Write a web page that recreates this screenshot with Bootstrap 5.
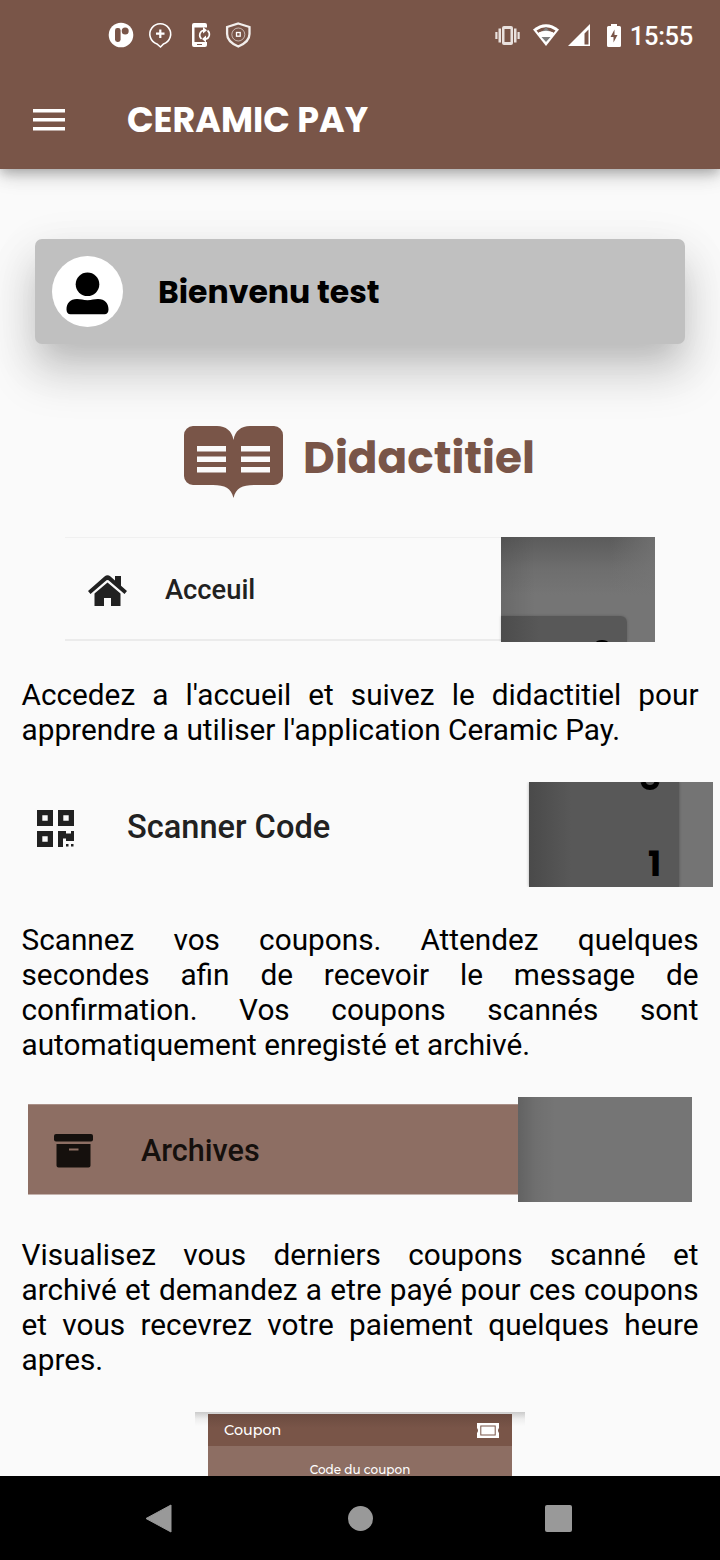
<!DOCTYPE html>
<html lang="fr">
<head>
<meta charset="utf-8">
<meta name="viewport" content="width=device-width, initial-scale=1">
<title>Ceramic Pay</title>
<link href="https://cdn.jsdelivr.net/npm/bootstrap@5.3.0/dist/css/bootstrap.min.css" rel="stylesheet">
<style>
:root{--brown:#795548;--brown-light:#8d6e63;--paper:#fafafa}
body{width:720px;height:1560px;background:var(--paper);color:#000;font-family:Roboto,"Noto Sans",sans-serif}
svg{display:block;flex:none}
.title-face{font-family:Poppins,Inter,"Open Sans",sans-serif;font-weight:700;white-space:nowrap;line-height:1}
.app-header{height:169px;background:var(--brown);color:#fff;box-shadow:0 5px 9px -1px rgba(0,0,0,.17),0 8px 18px rgba(0,0,0,.13),0 2px 20px rgba(0,0,0,.1);z-index:2}
.status{height:70px;padding:0 28px 0 107px}
.clock{font-size:25.5px;font-weight:500;line-height:1;letter-spacing:-.3px;margin:0 -1px 0 8px;padding-top:4px}
.toolbar{height:99px;padding-left:33px}
.toolbar h1{font-size:34.9px;margin-left:62px;padding-top:2px}
.page{padding-top:70px}
.welcome{height:105px;margin:0 35px;padding-left:17px;background:#c0c0c0;border-radius:7px;box-shadow:0 19px 26px -12px rgba(0,0,0,.1),0 28px 46px 4px rgba(0,0,0,.15),0 14px 50px 6px rgba(0,0,0,.06)}
.avatar{width:71px;height:71px;background:#fff}
.welcome h2{font-size:31.5px;margin-left:35px;padding-top:2px}
.guide{margin-top:81px;height:74px;gap:20px;padding-right:1px;color:var(--brown)}
.guide h2{font-size:43.75px;margin-top:-9px}
.shot{height:105px;overflow:hidden;color:#212121}
.shot-label{font-weight:500;line-height:1;white-space:nowrap}
.copy{width:677px;margin:35px auto;font-size:29.75px;line-height:35px;text-align:justify}
.scrim{background:linear-gradient(90deg,rgba(0,0,0,.16),rgba(0,0,0,.05) 18px,transparent 38px),#757575}
.shot-home{width:590px;margin-top:38px}
.shot-home .row-pane{width:436px;border-top:1px solid #f0f0f0;padding:5px 0 0 23px;height:104px;border-bottom:2px solid #ebebeb}
.shot-home .scrim{width:154px;background:linear-gradient(90deg,rgba(0,0,0,.1),transparent 34px),linear-gradient(90deg,transparent 110px,rgba(117,117,117,.75)),linear-gradient(#5b5b5b,#6e6e6e 32px,#757575 58px)}
.home-card{height:26px;width:126px;margin-top:79px;border-top-right-radius:6px;background:linear-gradient(90deg,#4c4c4c,#585858 38px);box-shadow:0 0 3px rgba(0,0,0,.2);overflow:hidden}
.dot-top{width:12px;height:5px;border-radius:50%;background:#000;margin:24px 0 0 95px}
.shot-scan{width:706px}
.shot-scan .row-pane{width:522px;padding-left:30px}
.shot-scan .scrim{width:184px;background:#747474}
.scan-card{width:150px;background:linear-gradient(90deg,#4a4a4a,#585858 42px);box-shadow:0 0 3px rgba(0,0,0,.3);color:#000}
.shot-archive{width:664px}
.shot-archive .row-pane{width:490px;height:91px;margin-top:7px;background:var(--brown-light);border-top:1px solid #a98f87;border-bottom:1px solid #c4b2ac;padding:2px 0 0 26px;color:#15100d}
.shot-archive .scrim{width:174px}
.coupon{width:330px;height:66px;overflow:hidden;background:linear-gradient(#cbcbcb,#eee 7px,#fafafa 14px);padding:2px 13px 0;color:#fff;font-family:Montserrat,Inter,sans-serif;font-weight:500}
.coupon-head{height:32px;padding:0 13px 0 16px;background:linear-gradient(#6b4b40,var(--brown) 14px);font-size:14.3px}
.coupon-body{height:40px;background:var(--brown-light);font-size:12px;line-height:14px;padding-top:17px}
.sys-nav{height:84px;background:#000}
</style>
</head>
<body class="d-flex flex-column overflow-hidden">
<header class="app-header position-relative flex-shrink-0">
  <div class="status d-flex align-items-center">
    <svg width="150" height="32" viewBox="107 19 150 32" fill="none" stroke="#fff">
      <circle cx="121" cy="35" r="12.3" fill="#fff" stroke="none"/>
      <rect x="115" y="28" width="5.6" height="14" rx="2.4" fill="#795548" stroke="none"/>
      <circle cx="125.2" cy="31" r="3.5" fill="#795548" stroke="none"/>
      <path d="M157 44a10.4 10.4 0 1 1 6.500 0l-3 3z" stroke-width="1.600"/>
      <path d="M160.300 29.500v8.500M156 33.700h8.500" stroke-width="2.200"/>
      <path d="M194 23h11a2 2 0 0 1 2 2v2.500h-12.500v14.500h12.500v3a2 2 0 0 1-2 2h-11a2 2 0 0 1-2-2V25a2 2 0 0 1 2-2z" fill="#fff" stroke="none"/>
      <path d="M197 44.500h5" stroke="#795548"/>
      <path d="M201.500 39a5 5 0 0 1 2.500-8.800M207.500 30.500a5 5 0 0 1-2 8.800" stroke-width="1.600"/>
      <path d="M203 27l4 3.300-4 3.300zM206 35.500v7l-4-3.500z" fill="#fff" stroke="none"/>
      <path d="M238.300 23.500l11.200 3.500v7c0 6-4 9.500-11.200 12.500-7.200-3-11.200-6.500-11.200-12.500v-7z" stroke-width="2.300" stroke="#f2eeec"/>
      <circle cx="238.300" cy="34.500" r="6.500" opacity=".55"/><rect x="236.500" y="32.500" width="3.700" height="3.700" stroke-width="1.300"/>
    </svg>
    <svg class="ms-auto" width="128" height="32" viewBox="493 19 128 32" fill="#fff">
      <g fill="#e9e1de"><path d="M503 26h7a2 2 0 0 1 2 2v15a2 2 0 0 1-2 2h-7a2 2 0 0 1-2-2V28a2 2 0 0 1 2-2zm.500 3v13h6V29z" fill-rule="evenodd"/><path d="M497.500 28.500h2.500v14h-2.500zM494.300 32h2.200v7h-2.200zM513 28.500h2.500v14h-2.500zM516.500 32h2.200v7h-2.200z"/></g>
      <path d="M532 29.500q13-10.500 26 0L545 46z"/>
      <path d="M535.500 30.500q9.500-6.500 19 0l-2 2.500q-7.500-4-15 0z" fill="#795548"/><path d="M545 27l4.500 5.500h-9zM540.500 37h9l-4.500 5z" fill="#7d7d7d"/><path d="M537.500 32.500q7.500-3.500 15 0l-2 2.500h-11z" fill="#fff"/>
      <path fill-rule="evenodd" d="M567 46l22-22v22zM583.500 33.500V44.500h4V29.500z"/>
      <path d="M610 24h6v2h2.500a1.500 1.500 0 0 1 1.500 1.500v18a1.500 1.500 0 0 1-1.500 1.500h-11a1.500 1.500 0 0 1-1.500-1.500v-18a1.500 1.500 0 0 1 1.500-1.500h2.500z"/>
      <path d="M613.500 29.500l-4 7.500h3v5.500l4-7.500h-3z" fill="#795548"/>
    </svg>
    <span class="clock">15:55</span>
  </div>
  <div class="toolbar d-flex align-items-center">
    <svg width="32" height="22" viewBox="0 0 32 22" fill="#fff"><path d="M0 0h32v3.600H0zM0 9h32v3.600H0zM0 18h32v3.600H0z"/></svg>
    <h1 class="title-face mb-0">CERAMIC PAY</h1>
  </div>
</header>

<main class="page flex-grow-1 overflow-hidden">
  <section class="welcome d-flex align-items-center">
    <div class="avatar rounded-circle d-flex align-items-center justify-content-center">
      <svg class="mt-1" width="43" height="43" viewBox="0 0 43 43"><circle cx="21.500" cy="12.300" r="11.800"/><path d="M11 27c4 0 6 1.200 10.500 1.200S28 27 32 27c7 0 10.500 4.500 10.500 10.500 0 3-1.500 4.800-4 4.800h-34c-2.500 0-4-1.800-4-4.800C.500 31.500 4 27 11 27z"/></svg>
    </div>
    <h2 class="title-face mb-0">Bienvenu test</h2>
  </section>

  <section class="guide d-flex align-items-center justify-content-center">
    <svg width="99" height="74" viewBox="0 0 99 74"><path fill="currentColor" d="M9 1h24c9 0 15 5 16.500 14C51 6 57 1 66 1h24a9 9 0 0 1 9 9v41a9 9 0 0 1-9 9H70c-12 0-18 3-20.500 13C47 63 41 60 29 60H9a9 9 0 0 1-9-9V10a9 9 0 0 1 9-9z"/><path fill="#fafafa" d="M13 21h29v5.500H13zM13 31.500h29v5.500H13zM13 42h29v5.500H13zM57 21h29v5.500H57zM57 31.500h29v5.500H57zM57 42h29v5.500H57z"/></svg>
    <h2 class="title-face mb-0">Didactitiel</h2>
  </section>

  <div class="shot shot-home d-flex mx-auto">
    <div class="row-pane d-flex align-items-center">
      <svg width="39" height="32" viewBox="0 0 39 32" fill="currentColor"><path d="M0 16L16.500 1.500q3-2.500 6 0L27 5.500V1h6v9.700L39 16l-2.500 3L20.500 5.300q-1-.7-2 0L2.500 19z"/><path d="M6.500 18.500L19.500 7.500l13 11V31H23v-8h-7v8H6.500z"/></svg>
      <span class="shot-label" style="font-size:27.3px;margin-left:38px">Acceuil</span>
    </div>
    <div class="scrim d-flex flex-column"><div class="home-card"><div class="dot-top"></div></div></div>
  </div>
  <p class="copy">Accedez a l'accueil et suivez le didactitiel pour apprendre a utiliser l'application Ceramic Pay.</p>

  <div class="shot shot-scan d-flex mx-auto">
    <div class="row-pane d-flex align-items-center">
      <svg style="margin-top:-12px" width="37" height="37" viewBox="0 0 37 37" fill="currentColor"><path fill-rule="evenodd" d="M0 0h16v16H0zM5.300 5.300v5.400h5.400V5.300zM21 0h16v16H21zM26.300 5.300v5.400h5.400V5.300zM0 21h16v16H0zM5.300 26.300v5.400h5.400v-5.400z"/><path d="M21 21h8v2.500h5V21h3v10h-8v-2.500h-3V37h-5zM29 34h2.500v2.500H29zM34 34h2.500v2.500H34z"/></svg>
      <span class="shot-label" style="font-size:32.600px;margin:-15px 0 0 53px">Scanner Code</span>
    </div>
    <div class="scrim"><div class="scan-card h-100">
      <svg width="150" height="105" viewBox="0 0 150 105"><path d="M114 0c1 4 4 5.500 7 5.500s6-1.500 7-5.500" fill="none" stroke="#000" stroke-width="5"/></svg>
      <span class="title-face d-block" style="font-size:35px;margin:-41px 0 0 119px">1</span>
    </div></div>
  </div>
  <p class="copy">Scannez vos coupons. Attendez quelques secondes afin de recevoir le message de confirmation. Vos coupons scannés sont automatiquement enregisté et archivé.</p>

  <div class="shot shot-archive d-flex mx-auto">
    <div class="row-pane d-flex align-items-center">
      <svg width="39" height="34" viewBox="0 0 39 34" fill="currentColor"><rect width="39" height="7.500" rx="2"/><path fill-rule="evenodd" d="M2.500 10h34v21.500a2 2 0 0 1-2 2h-30a2 2 0 0 1-2-2zM15 14.500v2h9.500v-2z"/></svg>
      <span class="shot-label" style="font-size:30.600px;margin:1px 0 0 48px">Archives</span>
    </div>
    <div class="scrim"></div>
  </div>
  <p class="copy">Visualisez vous derniers coupons scanné et archivé et demandez a etre payé pour ces coupons et vous recevrez votre paiement quelques heure apres.</p>

  <div class="coupon mx-auto">
    <div class="coupon-head d-flex align-items-center justify-content-between">
      <span style="padding-top:2px">Coupon</span>
      <svg width="22" height="15" viewBox="0 0 22 15"><path fill="#fff" d="M0 0h22v5q-2 2.500 0 5v5H0v-5q2-2.500 0-5z"/><rect x="3.800" y="3" width="14.400" height="9" fill="#fff" stroke="#795548"/></svg>
    </div>
    <div class="coupon-body text-center">Code du coupon</div>
  </div>
</main>

<footer class="sys-nav flex-shrink-0 d-flex justify-content-center">
  <svg width="720" height="84" viewBox="0 0 720 84" fill="#999"><path d="M146 42.500L171 29v27z" stroke="#999" stroke-linejoin="round"/><circle cx="360.500" cy="42.500" r="12.500"/><rect x="545" y="29" width="27" height="27" rx="2"/></svg>
</footer>
<script src="https://cdn.jsdelivr.net/npm/bootstrap@5.3.0/dist/js/bootstrap.bundle.min.js"></script>
</body>
</html>
